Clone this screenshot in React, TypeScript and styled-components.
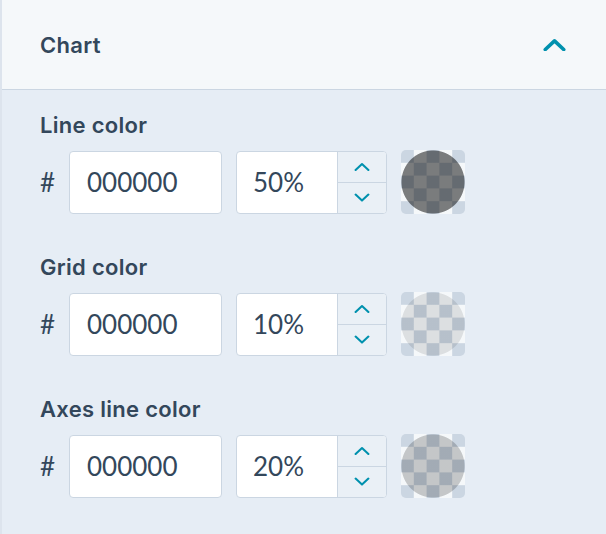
import React, {FC} from 'react';
import styled, {createGlobalStyle} from 'styled-components';

const GlobalStyle = createGlobalStyle`
  body {
    margin: 0;
    background: #e6edf5;
    font-family: Lato, 'Open Sans', sans-serif;
    color: #33475b;
  }
`;

type ColorSetting = {
  label: string;
  hex: string;
  opacity: number;
};

const settings: ColorSetting[] = [
  {label: 'Line color', hex: '000000', opacity: 50},
  {label: 'Grid color', hex: '000000', opacity: 10},
  {label: 'Axes line color', hex: '000000', opacity: 20},
];

const Chevron: FC<{dir: 'up' | 'down'; size: number; stroke: number}> = ({dir, size, stroke}) => (
  <svg width={size} height={size * 0.6} viewBox="0 0 20 12" fill="none">
    <path
      d={dir === 'up' ? 'M2 10 L10 2.5 L18 10' : 'M2 2 L10 9.5 L18 2'}
      stroke="#0091ae"
      strokeWidth={stroke}
      strokeLinecap="round"
      strokeLinejoin="round"
    />
  </svg>
);

const ColorRow: FC<{setting: ColorSetting}> = ({setting}) => (
  <Section>
    <Label>{setting.label}</Label>
    <Row>
      <Hash>#</Hash>
      <HexInput defaultValue={setting.hex} />
      <PercentField>
        <PercentInput defaultValue={`${setting.opacity}%`} />
        <Stepper>
          <StepButton>
            <Chevron dir="up" size={16} stroke={2.6} />
          </StepButton>
          <StepButton>
            <Chevron dir="down" size={16} stroke={2.6} />
          </StepButton>
        </Stepper>
      </PercentField>
      <Swatch $hex={setting.hex} $alpha={setting.opacity / 100} />
    </Row>
  </Section>
);

export default function App() {
  return (
    <>
      <GlobalStyle />
      <Panel>
        <Header>
          <Title>Chart</Title>
          <Chevron dir="up" size={23} stroke={3.2} />
        </Header>
        <Body>
          {settings.map(s => (
            <ColorRow key={s.label} setting={s} />
          ))}
        </Body>
      </Panel>
    </>
  );
}

const Panel = styled.div`
  min-height: 534px;
  border-left: 2px solid #dde4ed;
  box-sizing: border-box;
`;

const Header = styled.div`
  height: 89px;
  display: flex;
  align-items: center;
  justify-content: space-between;
  padding: 0 40px 0 38px;
  background: #f5f8fa;
  border-bottom: 1px solid #cbd6e2;
`;

const Title = styled.div`
  font-family: Inter, Lato, sans-serif;
  font-size: 22px;
  font-weight: 600;
  letter-spacing: 0.3px;
  line-height: 26px;
`;

const Body = styled.div`
  padding: 22px 38px;
  display: flex;
  flex-direction: column;
  gap: 40px;
`;

const Section = styled.div`
  display: flex;
  flex-direction: column;
  gap: 12px;
`;

const Label = styled.div`
  font-family: Inter, Lato, sans-serif;
  font-size: 22px;
  font-weight: 600;
  letter-spacing: 0.3px;
  line-height: 26px;
`;

const Row = styled.div`
  display: flex;
  align-items: center;
  gap: 14px;
  height: 64px;
`;

const Hash = styled.span`
  font-size: 26px;
  width: 15px;
`;

const HexInput = styled.input`
  box-sizing: border-box;
  width: 153px;
  height: 63px;
  padding: 0 17px;
  border: 1px solid #cbd6e2;
  border-radius: 4px;
  background: #fff;
  font: inherit;
  font-size: 26px;
  color: #33475b;
  outline: none;
`;

const PercentField = styled.div`
  box-sizing: border-box;
  width: 151px;
  height: 63px;
  display: flex;
  border: 1px solid #cbd6e2;
  border-radius: 4px;
  background: #fff;
  overflow: hidden;
`;

const PercentInput = styled.input`
  flex: 1;
  min-width: 0;
  padding: 0 16px;
  border: none;
  background: transparent;
  font: inherit;
  font-size: 26px;
  color: #33475b;
  outline: none;
`;

const Stepper = styled.div`
  width: 48px;
  display: flex;
  flex-direction: column;
  border-left: 1px solid #cbd6e2;
  background: #eaf0f6;
`;

const StepButton = styled.div`
  flex: 1;
  display: flex;
  align-items: center;
  justify-content: center;
  & + & {
    border-top: 1px solid #cbd6e2;
  }
`;

const Swatch = styled.div<{$hex: string; $alpha: number}>`
  width: 64px;
  height: 64px;
  border-radius: 5px;
  background:
    radial-gradient(
      circle closest-side,
      ${p => hexToRgba(p.$hex, p.$alpha)} 97%,
      transparent 100%
    ),
    conic-gradient(#f5f8fa 0 25%, #cbd6e2 0 50%, #f5f8fa 0 75%, #cbd6e2 0) 0 0 / 25.6px 25.6px;
`;

function hexToRgba(hex: string, alpha: number) {
  const n = parseInt(hex, 16);
  return `rgba(${(n >> 16) & 255}, ${(n >> 8) & 255}, ${n & 255}, ${alpha})`;
}
